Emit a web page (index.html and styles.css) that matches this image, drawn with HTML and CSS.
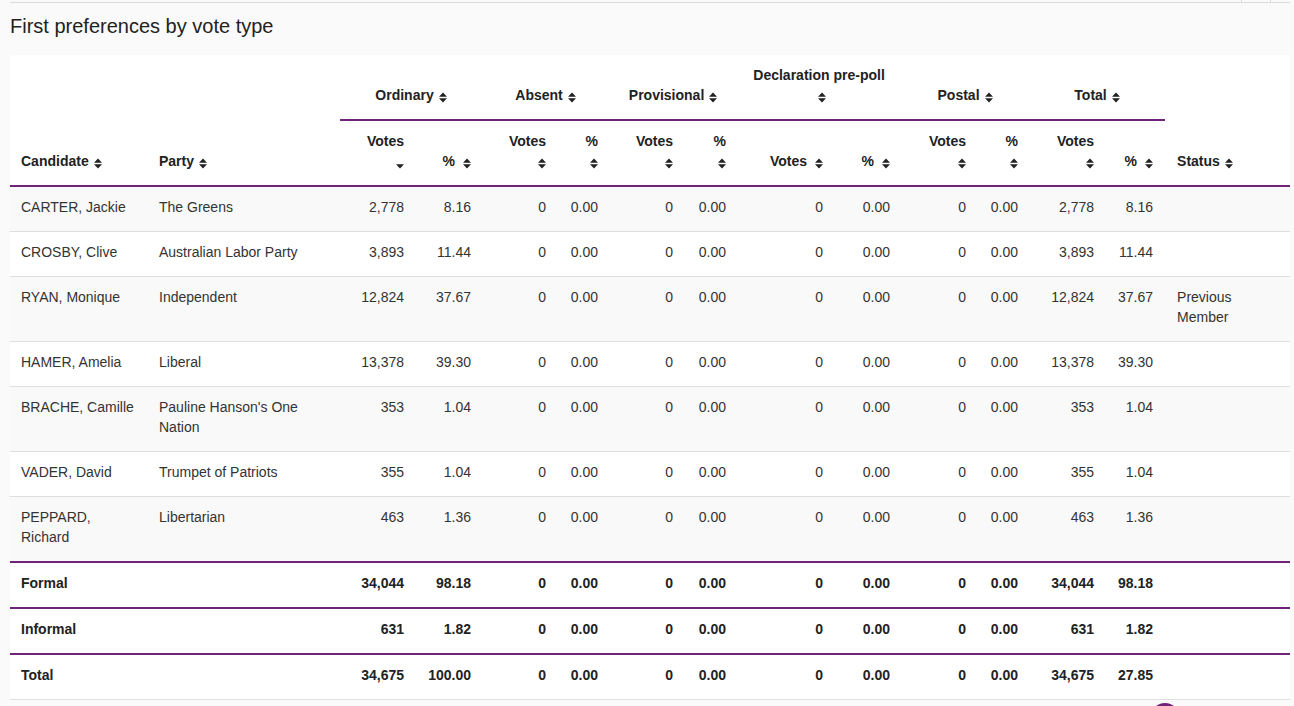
FILE: index.html
```html
<!DOCTYPE html>
<html lang="en">
<head>
<meta charset="utf-8">
<title>First preferences by vote type</title>
<link rel="stylesheet" href="styles.css">
</head>
<body>
<svg class="defs" width="0" height="0" aria-hidden="true">
  <symbol id="sort" viewBox="0 0 8 11"><path d="M0 4.8 L4 0.6 L8 4.8 Z M0 6.2 L8 6.2 L4 10.4 Z"/></symbol>
  <symbol id="sort-desc" viewBox="0 0 8 11"><path d="M0 6.2 L8 6.2 L4 10.4 Z"/></symbol>
</svg>
<div class="page">
  <div class="topbar"><div class="topbar-tab"></div></div>
  <h2 class="title">First preferences by vote type</h2>
  <table class="results">
    <colgroup>
      <col class="c-cand"><col class="c-party">
      <col class="c-ov"><col class="c-op">
      <col class="c-av"><col class="c-ap">
      <col class="c-pv"><col class="c-pp">
      <col class="c-dv"><col class="c-dp">
      <col class="c-sv"><col class="c-sp">
      <col class="c-tv"><col class="c-tp">
      <col class="c-status">
    </colgroup>
    <thead>
      <tr>
        <th class="left main" rowspan="2">Candidate<svg class="si"><use href="#sort"/></svg></th>
        <th class="left main" rowspan="2">Party<svg class="si"><use href="#sort"/></svg></th>
        <th class="group" colspan="2">Ordinary<svg class="si"><use href="#sort"/></svg></th>
        <th class="group" colspan="2">Absent<svg class="si"><use href="#sort"/></svg></th>
        <th class="group" colspan="2">Provisional<svg class="si"><use href="#sort"/></svg></th>
        <th class="group" colspan="2">Declaration pre-poll<br><svg class="si"><use href="#sort"/></svg></th>
        <th class="group" colspan="2">Postal<svg class="si"><use href="#sort"/></svg></th>
        <th class="group" colspan="2">Total<svg class="si"><use href="#sort"/></svg></th>
        <th class="left main status" rowspan="2">Status<svg class="si"><use href="#sort"/></svg></th>
      </tr>
      <tr>
        <th class="sub">Votes<br><svg class="si"><use href="#sort-desc"/></svg></th>
        <th class="sub">%<svg class="si wide"><use href="#sort"/></svg></th>
        <th class="sub">Votes<br><svg class="si"><use href="#sort"/></svg></th>
        <th class="sub">%<br><svg class="si"><use href="#sort"/></svg></th>
        <th class="sub">Votes<br><svg class="si"><use href="#sort"/></svg></th>
        <th class="sub">%<br><svg class="si"><use href="#sort"/></svg></th>
        <th class="sub">Votes<svg class="si wide"><use href="#sort"/></svg></th>
        <th class="sub">%<svg class="si wide"><use href="#sort"/></svg></th>
        <th class="sub">Votes<br><svg class="si"><use href="#sort"/></svg></th>
        <th class="sub">%<br><svg class="si"><use href="#sort"/></svg></th>
        <th class="sub">Votes<br><svg class="si"><use href="#sort"/></svg></th>
        <th class="sub last">%<svg class="si wide"><use href="#sort"/></svg></th>
      </tr>
    </thead>
    <tbody>
      <tr>
        <td class="text">CARTER, Jackie</td><td class="text">The Greens</td>
        <td>2,778</td><td>8.16</td><td>0</td><td>0.00</td><td>0</td><td>0.00</td><td>0</td><td>0.00</td><td>0</td><td>0.00</td><td>2,778</td><td class="last">8.16</td>
        <td class="text status"></td>
      </tr>
      <tr>
        <td class="text">CROSBY, Clive</td><td class="text">Australian Labor Party</td>
        <td>3,893</td><td>11.44</td><td>0</td><td>0.00</td><td>0</td><td>0.00</td><td>0</td><td>0.00</td><td>0</td><td>0.00</td><td>3,893</td><td class="last">11.44</td>
        <td class="text status"></td>
      </tr>
      <tr>
        <td class="text">RYAN, Monique</td><td class="text">Independent</td>
        <td>12,824</td><td>37.67</td><td>0</td><td>0.00</td><td>0</td><td>0.00</td><td>0</td><td>0.00</td><td>0</td><td>0.00</td><td>12,824</td><td class="last">37.67</td>
        <td class="text status">Previous Member</td>
      </tr>
      <tr>
        <td class="text">HAMER, Amelia</td><td class="text">Liberal</td>
        <td>13,378</td><td>39.30</td><td>0</td><td>0.00</td><td>0</td><td>0.00</td><td>0</td><td>0.00</td><td>0</td><td>0.00</td><td>13,378</td><td class="last">39.30</td>
        <td class="text status"></td>
      </tr>
      <tr>
        <td class="text">BRACHE, Camille</td><td class="text">Pauline Hanson's One Nation</td>
        <td>353</td><td>1.04</td><td>0</td><td>0.00</td><td>0</td><td>0.00</td><td>0</td><td>0.00</td><td>0</td><td>0.00</td><td>353</td><td class="last">1.04</td>
        <td class="text status"></td>
      </tr>
      <tr>
        <td class="text">VADER, David</td><td class="text">Trumpet of Patriots</td>
        <td>355</td><td>1.04</td><td>0</td><td>0.00</td><td>0</td><td>0.00</td><td>0</td><td>0.00</td><td>0</td><td>0.00</td><td>355</td><td class="last">1.04</td>
        <td class="text status"></td>
      </tr>
      <tr>
        <td class="text">PEPPARD, Richard</td><td class="text">Libertarian</td>
        <td>463</td><td>1.36</td><td>0</td><td>0.00</td><td>0</td><td>0.00</td><td>0</td><td>0.00</td><td>0</td><td>0.00</td><td>463</td><td class="last">1.36</td>
        <td class="text status"></td>
      </tr>
    </tbody>
    <tfoot>
      <tr>
        <td class="text">Formal</td><td class="text"></td>
        <td>34,044</td><td>98.18</td><td>0</td><td>0.00</td><td>0</td><td>0.00</td><td>0</td><td>0.00</td><td>0</td><td>0.00</td><td>34,044</td><td class="last">98.18</td>
        <td class="text status"></td>
      </tr>
      <tr>
        <td class="text">Informal</td><td class="text"></td>
        <td>631</td><td>1.82</td><td>0</td><td>0.00</td><td>0</td><td>0.00</td><td>0</td><td>0.00</td><td>0</td><td>0.00</td><td>631</td><td class="last">1.82</td>
        <td class="text status"></td>
      </tr>
      <tr>
        <td class="text">Total</td><td class="text"></td>
        <td>34,675</td><td>100.00</td><td>0</td><td>0.00</td><td>0</td><td>0.00</td><td>0</td><td>0.00</td><td>0</td><td>0.00</td><td>34,675</td><td class="last">27.85</td>
        <td class="text status"></td>
      </tr>
    </tfoot>
  </table>
</div>
<div class="fab"></div>
</body>
</html>
```

FILE: styles.css
```css
html, body {
  margin: 0;
  padding: 0;
}

body {
  background: #fafafa;
  font-family: "Liberation Sans", Arial, sans-serif;
  font-size: 14px;
  color: #333;
}

.defs {
  position: absolute;
  width: 0;
  height: 0;
  overflow: hidden;
}

.page {
  margin: 0 4px 0 10px;
}

.topbar {
  height: 2px;
  border-bottom: 1px solid #dcdcdc;
  display: flex;
  justify-content: flex-end;
}

.topbar-tab {
  width: 28px;
  border-left: 1px solid #dcdcdc;
  border-right: 1px solid #dcdcdc;
  margin-right: 19px;
}

.title {
  font-size: 20px;
  font-weight: normal;
  line-height: 22px;
  margin: 12px 0 18px;
  color: #222;
}

.results {
  width: 1280px;
  table-layout: fixed;
  border-collapse: collapse;
  background: #fff;
}

.c-cand { width: 138px; }
.c-party { width: 192px; }
.c-ov { width: 75px; }
.c-op { width: 67px; }
.c-av { width: 75px; }
.c-ap { width: 52px; }
.c-pv { width: 75px; }
.c-pp { width: 53px; }
.c-dv { width: 97px; }
.c-dp { width: 67px; }
.c-sv { width: 76px; }
.c-sp { width: 52px; }
.c-tv { width: 76px; }
.c-tp { width: 60px; }
.c-status { width: 125px; }

.results th {
  font-weight: bold;
  color: #222;
  padding: 10px 11px 14px;
  line-height: 20px;
  vertical-align: bottom;
  text-align: right;
}

.results th.left {
  text-align: left;
}

.results th.group {
  text-align: center;
  border-bottom: 2px solid #6f2479;
}

.results th.main,
.results th.sub {
  border-bottom: 2px solid #6f2479;
}

.results th.last,
.results td.last {
  padding-right: 12px;
}

.results th.status,
.results td.status {
  padding-left: 12px;
}

.si {
  display: inline-block;
  width: 8px;
  height: 11px;
  margin-left: 5px;
  vertical-align: -3px;
  fill: #222;
}

.si.wide {
  margin-left: 8px;
}

.results td {
  padding: 10px 11px 14px;
  line-height: 20px;
  vertical-align: top;
  text-align: right;
  border-bottom: 1px solid #dedede;
}

.results td.text {
  text-align: left;
}

.results tbody tr:nth-child(odd) {
  background: #f9f9f9;
}

.results tfoot td {
  font-weight: bold;
  color: #222;
  border-top: 2px solid #6f2479;
}

.fab {
  position: fixed;
  left: 1151px;
  top: 703px;
  width: 28px;
  height: 28px;
  border-radius: 50%;
  background: #6f2479;
}
```
